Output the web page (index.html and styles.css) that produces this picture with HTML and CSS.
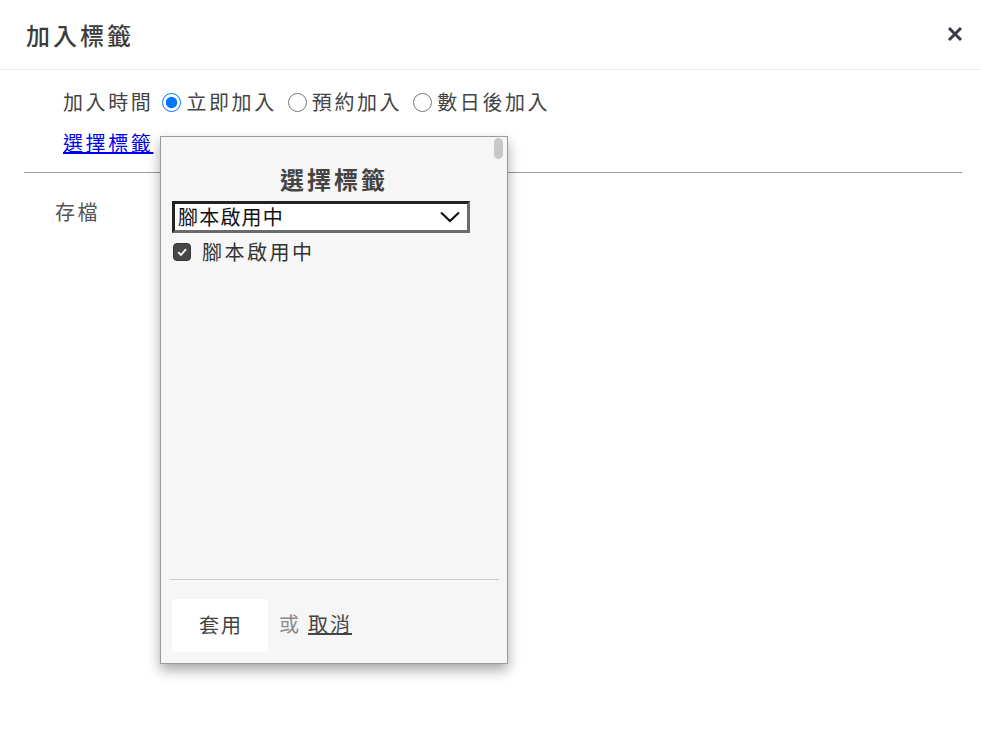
FILE: index.html
```html
<!DOCTYPE html>
<html lang="zh-Hant">
<head>
  <meta charset="UTF-8">
  <meta name="viewport" content="width=device-width, initial-scale=1.0">
  <title>加入標籤</title>
  <link rel="stylesheet" href="styles.css">
</head>
<body>
  <div class="dialog">
    <div class="dialog-header">
      <h2>加入標籤</h2>
      <span class="close"><svg width="16" height="16" viewBox="0 0 16 16"><path d="M2 2 L14 14 M14 2 L2 14" stroke="#3a3a44" stroke-width="3" stroke-linecap="butt"/></svg></span>
    </div>

    <div class="dialog-body">
      <div class="time-row">
        <span class="field-label">加入時間</span>
        <label class="radio"><input type="radio" name="when" checked>立即加入</label>
        <label class="radio"><input type="radio" name="when">預約加入</label>
        <label class="radio"><input type="radio" name="when">數日後加入</label>
      </div>
      <div class="tag-row">
        <a href="#" class="tag-link">選擇標籤</a>
      </div>
      <hr class="divider">
      <div class="save">存檔</div>
    </div>

    <!-- tag picker popup -->
    <div class="picker">
      <div class="picker-scroll"></div>
      <h3>選擇標籤</h3>
      <div class="picker-select">
        <span>腳本啟用中</span>
        <svg width="22" height="14" viewBox="0 0 22 14"><path d="M2 2.5 L11 11 L20 2.5" fill="none" stroke="#111" stroke-width="2.2"/></svg>
      </div>
      <label class="picker-option">
        <span class="check"><svg width="12" height="12" viewBox="0 0 12 12"><path d="M2.2 6.2 L5 9 L10 3.2" fill="none" stroke="#fff" stroke-width="1.8"/></svg></span>
        腳本啟用中
      </label>
      <div class="picker-spacer"></div>
      <div class="picker-footer">
        <button class="apply">套用</button>
        <span class="or">或</span>
        <a href="#" class="cancel">取消</a>
      </div>
    </div>
  </div>
</body>
</html>
```

FILE: styles.css
```css
body {
  margin: 0;
  background-color: #fff;
  font-family: "Noto Sans CJK TC", "Noto Sans", sans-serif;
  color: #444;
}

.dialog {
  position: relative;
  min-height: 739px;
}

.dialog-header {
  height: 69px;
  display: flex;
  align-items: center;
  justify-content: space-between;
  padding: 0 18px 0 26px;
  border-bottom: 1px solid #eee;
}

.dialog-header h2 {
  margin: 0;
  font-size: 24px;
  font-weight: 500;
  letter-spacing: 3px;
  color: #3c3c3c;
  line-height: 34px;
  padding-top: 1px;
}

.close {
  display: flex;
  padding-bottom: 1px;
}

.dialog-body {
  padding: 17px 19px 0 24px;
}

.time-row {
  display: flex;
  align-items: center;
  padding-left: 39px;
  font-size: 20px;
  letter-spacing: 2.6px;
  line-height: 30px;
  height: 30px;
  color: #444;
}

.radio {
  display: flex;
  align-items: center;
}

.radio input {
  width: 19px;
  height: 19px;
  margin: 0 5px 0 9px;
}

.radio + .radio input {
  margin-left: 11px;
}

.tag-row {
  padding-left: 39px;
  margin-top: 11px;
  height: 30px;
  line-height: 30px;
}

.tag-link {
  font-size: 20px;
  letter-spacing: 2.6px;
  color: #0000ee;
  text-decoration: underline;
}

.divider {
  border: none;
  border-top: 1px solid #999;
  margin: 14px 0 0 0;
}

.save {
  padding: 24px 0 0 31px;
  font-size: 20px;
  letter-spacing: 2.6px;
  line-height: 30px;
  color: #555;
}

.picker {
  position: absolute;
  left: 160px;
  top: 136px;
  width: 346px;
  height: 526px;
  border: 1px solid #9a9a9a;
  background-color: #f6f6f6;
  box-shadow: 0 6px 12px rgba(0, 0, 0, 0.35);
  display: flex;
  flex-direction: column;
}

.picker-scroll {
  position: absolute;
  right: 4px;
  top: 1px;
  width: 9px;
  height: 21px;
  border-radius: 5px;
  background-color: #c8c8c8;
}

.picker h3 {
  margin: 25px 0 0 0;
  text-align: center;
  font-size: 24px;
  font-weight: bold;
  letter-spacing: 3px;
  color: #444;
  line-height: 34px;
}

.picker-select {
  margin: 5px 0 0 11px;
  height: 26px;
  width: 283px;
  border-style: solid;
  border-width: 3px;
  border-color: #222 #6b6b6b #6b6b6b #222;
  background-color: #fff;
  display: flex;
  align-items: center;
  justify-content: space-between;
  padding-left: 3px;
  padding-right: 6px;
  font-size: 20px;
  letter-spacing: 1.2px;
  line-height: 26px;
  color: #111;
}

.picker-option {
  margin: 6px 0 0 12px;
  display: flex;
  align-items: center;
  font-size: 20px;
  letter-spacing: 2.5px;
  line-height: 26px;
  color: #333;
  height: 26px;
}

.check {
  width: 16px;
  height: 16px;
  border: 1px solid #333;
  border-radius: 4px;
  background-color: #474747;
  display: flex;
  align-items: center;
  justify-content: center;
  margin-right: 11px;
}

.picker-spacer {
  flex: 1;
}

.picker-footer {
  margin: 0 8px 11px 9px;
  border-top: 1px solid #ccc;
  padding: 19px 0 0 2px;
  display: flex;
  align-items: center;
  font-size: 20px;
  line-height: 30px;
}

.apply {
  width: 96px;
  height: 53px;
  border: none;
  border-radius: 4px;
  background-color: #fff;
  font-family: inherit;
  font-size: 20px;
  letter-spacing: 2px;
  color: #444;
  padding: 0 0 3px 2px;
}

.or {
  margin-left: 11px;
  color: #888;
  padding-bottom: 3px;
}

.cancel {
  margin-left: 9px;
  letter-spacing: 2px;
  color: #444;
  text-decoration: underline;
  padding-bottom: 3px;
}
```
